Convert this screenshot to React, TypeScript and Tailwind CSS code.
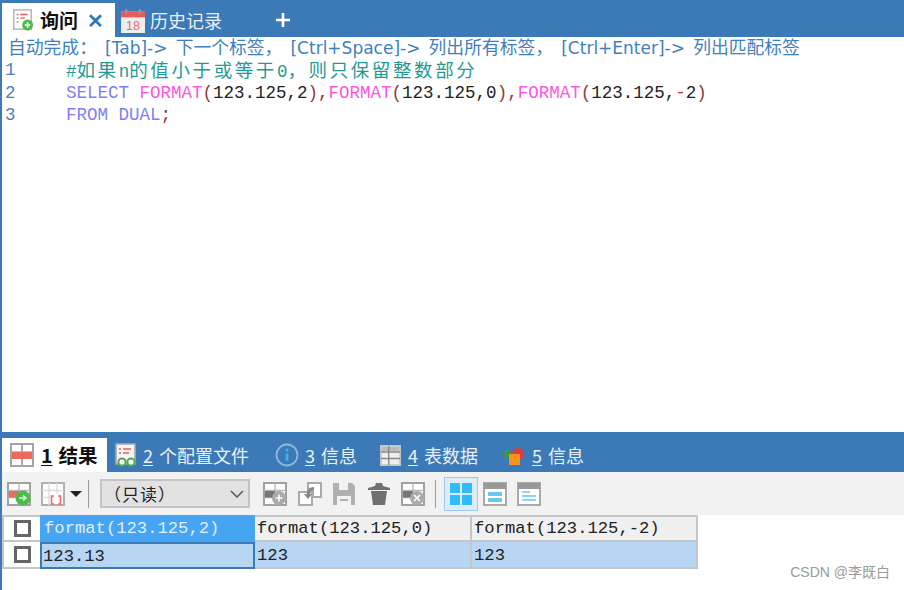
import type { ReactNode } from "react";

const cjk = "font-['Noto_Sans_CJK_SC','Liberation_Sans',sans-serif]";
const mono = "font-['Liberation_Mono','Noto_Sans_CJK_SC',monospace]";

function Svg({ size = 24, children }: { size?: number; children: ReactNode }) {
  return (
    <svg width={size} height={size} viewBox="0 0 24 24" className="shrink-0">
      {children}
    </svg>
  );
}

function GridBase() {
  return (
    <>
      <rect x="1" y="1" width="22" height="22" fill="#fff" stroke="#a0a0a0" strokeWidth="2" />
      <path d="M1 8.5H23M1 15.5H23M12 1V23" stroke="#b8b8b8" strokeWidth="1.4" />
    </>
  );
}

function QueryIcon() {
  return (
    <Svg size={22}>
      <rect x="2" y="1" width="19" height="21" fill="#fff" stroke="#b5b5b5" strokeWidth="1.6" />
      <path d="M5 6H7M9 6H17M5 10H7M9 10H14M5 14H7" stroke="#e0605a" strokeWidth="1.5" />
      <circle cx="17" cy="17.5" r="6" fill="#4dbb4a" />
      <path d="M14 17.5H20M17 14.5V20.5" stroke="#fff" strokeWidth="1.8" />
    </Svg>
  );
}

function CalendarIcon() {
  return (
    <Svg size={25}>
      <rect x="1" y="3" width="23" height="21" fill="#eeeeee" />
      <rect x="1" y="3" width="23" height="6" fill="#ea5a5a" />
      <path d="M6 1V6M19 1V6" stroke="#999" strokeWidth="2" />
      <text x="12.5" y="21" textAnchor="middle" fontSize="12" fill="#e66a6a" fontFamily="Liberation Sans">18</text>
    </Svg>
  );
}

function TabLabel({ n, label }: { n: string; label: string }) {
  return (
    <span className="flex gap-[6px] whitespace-nowrap">
      <span className="underline underline-offset-2">{n}</span>
      <span>{label}</span>
    </span>
  );
}

function ResultTabs() {
  return (
    <div className={`flex h-10 shrink-0 items-end bg-[#3c7ab7] text-[18px] text-[#e8f0f8] ${cjk}`}>
      <div className="flex h-[34px] w-[105px] items-center gap-[7px] bg-white pl-2 text-[19.5px] font-bold text-[#111]">
        <Svg>
          <rect x="1" y="1" width="22" height="22" fill="#fff" stroke="#a5a5a5" strokeWidth="2" />
          <rect x="2" y="8.5" width="20" height="7.5" fill="#ee6a60" />
          <path d="M12 1V9M12 16V23" stroke="#aaa" strokeWidth="2" />
        </Svg>
        <TabLabel n="1" label="结果" />
      </div>
      <div className="ml-[7px] flex h-[34px] items-center gap-[5px]">
        <Svg>
          <rect x="2" y="1" width="19" height="20" fill="#f4f4f4" stroke="#aaa" strokeWidth="1.6" />
          <path d="M5 6H7M9 6H17M5 10H7M9 10H15" stroke="#e0605a" strokeWidth="1.5" />
          <circle cx="8" cy="19" r="3.6" fill="#fff" stroke="#4dab4a" strokeWidth="2" />
          <circle cx="17" cy="19" r="3.6" fill="#fff" stroke="#4dab4a" strokeWidth="2" />
        </Svg>
        <TabLabel n="2" label="个配置文件" />
      </div>
      <div className="ml-[26px] flex h-[34px] items-center gap-[6px]">
        <Svg>
          <circle cx="12" cy="12" r="10.5" fill="none" stroke="#8fb8d8" strokeWidth="1.8" />
          <circle cx="12" cy="7" r="1.6" fill="#35b4f4" />
          <path d="M12 10.5V18" stroke="#35b4f4" strokeWidth="2.6" />
        </Svg>
        <TabLabel n="3" label="信息" />
      </div>
      <div className="ml-[23px] flex h-[34px] items-center gap-[7px]">
        <Svg size={21}>
          <rect x="1" y="1" width="22" height="22" fill="#eee" stroke="#c4c4c4" strokeWidth="2" />
          <rect x="2" y="2" width="20" height="5" fill="#bbb" />
          <path d="M1 8H23M1 15.5H23M10 1V23" stroke="#888" strokeWidth="1.6" />
        </Svg>
        <TabLabel n="4" label="表数据" />
      </div>
      <div className="ml-[23px] flex h-[34px] items-center gap-[7px]">
        <Svg>
          <path d="M1 15L7 5L12 15Z" fill="#3a9a3a" />
          <circle cx="17" cy="11" r="6" fill="#e03a3a" />
          <rect x="8" y="11" width="11" height="11" fill="#f5941d" />
        </Svg>
        <TabLabel n="5" label="信息" />
      </div>
    </div>
  );
}

function ToolButton({ children, active }: { children: ReactNode; active?: boolean }) {
  return (
    <div className={`flex size-[34px] shrink-0 items-center justify-center border ${active ? "border-[#9cc8ec] bg-[#dcecf9]" : "border-transparent"}`}>
      {children}
    </div>
  );
}

function Toolbar() {
  return (
    <div className={`flex h-[43px] shrink-0 items-center bg-[#f2f2f2] pl-[5px] ${cjk}`}>
      <Svg>
        <GridBase />
        <rect x="2" y="9" width="10" height="6.5" fill="#ee6a60" />
        <circle cx="16" cy="16" r="7.5" fill="#4dbb4a" />
        <path d="M12 16H19M16 13.5L19 16L16 18.5" stroke="#d8f5d8" strokeWidth="1.6" fill="none" />
      </Svg>
      <div className="ml-[10px] flex items-center gap-[5px]">
        <Svg>
          <rect x="1" y="1" width="22" height="22" fill="#fff" stroke="#b0b0b0" strokeWidth="2" />
          <path d="M1 8.5H23M1 15.5H12M8 1V23M16 1V12" stroke="#dcdcdc" strokeWidth="1.4" />
          <path d="M13 14H10.5V22H13M17 14H19.5V22H17" stroke="#ee6a60" strokeWidth="1.5" fill="none" />
        </Svg>
        <div className="size-0 border-x-[6px] border-t-[6px] border-x-transparent border-t-[#222]" />
      </div>
      <div className="ml-[6px] mr-[11px] h-[28px] w-px bg-[#9a9a9a]" />
      <div className="flex h-[29px] w-[150px] items-center justify-between border-2 border-[#c4c4c4] bg-[#e2e2e2] pr-[3px] text-[17px] text-[#222]">
        <span className="pl-[2px] tracking-[1px]">（只读）</span>
        <svg width="16" height="10" viewBox="0 0 16 10">
          <path d="M2 2L8 8L14 2" fill="none" stroke="#555" strokeWidth="1.5" />
        </svg>
      </div>
      <div className="ml-[13px] flex items-center gap-[10.5px]">
        <Svg>
          <GridBase />
          <rect x="2" y="9" width="10" height="6.5" fill="#777" />
          <circle cx="16" cy="16" r="7" fill="#aaa" />
          <path d="M12.5 16H19.5M16 12.5V19.5" stroke="#fff" strokeWidth="1.6" />
        </Svg>
        <Svg>
          <path d="M10 1H23V15H15V9H10Z" fill="#fff" stroke="#aaa" strokeWidth="2" />
          <path d="M1 10H14V23H1Z" fill="#fff" stroke="#aaa" strokeWidth="2" />
          <path d="M16 5C11 5 9 8 9 12H6L10 17L14 12H12C12 9 13 8 16 8Z" fill="#888" />
        </Svg>
        <Svg>
          <path d="M1 1H20L23 4V23H1Z" fill="#b0b0b0" />
          <rect x="7" y="1" width="9" height="7" fill="#f2f2f2" />
          <rect x="5" y="14" width="14" height="9" fill="#f2f2f2" />
          <path d="M8 18H16" stroke="#b0b0b0" strokeWidth="2" />
        </Svg>
        <Svg>
          <path d="M1 6L8 4L9 1H15L16 4L23 6V8H1Z" fill="#707070" />
          <path d="M4 9H20L18 23H6Z" fill="#707070" />
        </Svg>
        <Svg>
          <GridBase />
          <rect x="2" y="9" width="10" height="6.5" fill="#777" />
          <circle cx="16" cy="16" r="7" fill="#aaa" />
          <path d="M13 13L19 19M19 13L13 19" stroke="#fff" strokeWidth="1.6" />
        </Svg>
      </div>
      <div className="ml-[10px] mr-[8px] h-[28px] w-px bg-[#9a9a9a]" />
      <ToolButton active>
        <Svg>
          <path d="M1 1H11V11H1ZM13 1H23V11H13ZM1 13H11V23H1ZM13 13H23V23H13Z" fill="#2fbcf8" />
        </Svg>
      </ToolButton>
      <ToolButton>
        <Svg>
          <rect x="1" y="1" width="22" height="22" fill="#fff" stroke="#aaa" strokeWidth="2" />
          <rect x="1" y="1" width="22" height="6" fill="#999" />
          <path d="M5 10H19V14H5ZM5 16H19V20H5Z" fill="#6cc4f2" />
        </Svg>
      </ToolButton>
      <ToolButton>
        <Svg>
          <rect x="1" y="1" width="22" height="22" fill="#fff" stroke="#aaa" strokeWidth="2" />
          <rect x="1" y="1" width="22" height="6" fill="#999" />
          <path d="M5 10H13M5 14H19M5 18H19" stroke="#6cc4f2" strokeWidth="1.6" />
        </Svg>
      </ToolButton>
    </div>
  );
}

function RowCheck() {
  return <div className="size-[17px] border-[3px] border-[#666] bg-white" />;
}

function ResultTable() {
  const cols = ["format(123.125,0)", "format(123.125,-2)"];
  return (
    <div className={`grid w-[696px] grid-cols-[38px_215px_217px_226px] grid-rows-[27px_27px] text-[17.2px] leading-none ${mono}`}>
      <div className="flex items-center justify-center border-y-2 border-l-2 border-[#c6c6c6] bg-white">
        <RowCheck />
      </div>
      <div className="flex items-center bg-[#46a5f3] pl-[4px] pt-[1px] text-[#dff0ff]">format(123.125,2)</div>
      {cols.map((c) => (
        <div key={c} className="flex items-center border-y-2 border-r-2 border-[#c6c6c6] bg-[#f0f0f0] pl-[2px] pt-[1px] text-[#222]">
          {c}
        </div>
      ))}
      <div className="flex items-center justify-center border-b-2 border-l-2 border-[#c6c6c6] bg-white">
        <RowCheck />
      </div>
      <div className="flex items-center border-2 border-[#3c7ab7] bg-[#b6d6f4] pl-[1px] pt-[2px] text-[#222]">123.13</div>
      <div className="flex items-center border-r-2 border-b-2 border-[#c6c6c6] bg-[#b6d6f4] pl-[2px] pt-[3px] text-[#222]">123</div>
      <div className="flex items-center border-r-2 border-b-2 border-[#c6c6c6] bg-[#b6d6f4] pl-[2px] pt-[3px] text-[#222]">123</div>
    </div>
  );
}

function Key({ children }: { children: ReactNode }) {
  return <span className="text-[17px]">{children}</span>;
}

function Han({ children }: { children: ReactNode }) {
  return <span className="text-[18.5px] leading-none tracking-[2.6px]">{children}</span>;
}

export default function App() {
  return (
    <div className="flex h-[590px] w-[904px] flex-col overflow-hidden border-l-2 border-[#3c7ab7] bg-white">
      <div className={`flex h-[37px] shrink-0 items-end bg-[#3c7ab7] text-[18px] ${cjk}`}>
        <div className="flex h-[34px] w-[113px] items-center bg-white pl-[10px] text-[19px] font-bold text-[#111]">
          <QueryIcon />
          <span className="ml-[6px] whitespace-nowrap">询问</span>
          <span className="ml-[9px] text-[20px] leading-none text-[#2f78b8]">✕</span>
        </div>
        <div className="ml-[5px] flex h-[34px] items-center gap-[5px] text-[#e8f0f8]">
          <CalendarIcon />
          <span className="whitespace-nowrap">历史记录</span>
        </div>
        <div className="ml-[53px] flex h-[34px] items-center">
          <svg width="16" height="16" viewBox="0 0 16 16">
            <path d="M8 1V15M1 8H15" stroke="#fff" strokeWidth="2.6" />
          </svg>
        </div>
      </div>

      <div className="flex min-h-0 flex-1 flex-col pl-[3px]">
        <div className="whitespace-pre pl-[3px] font-['DejaVu_Sans','Noto_Sans_CJK_SC',sans-serif] text-[17.8px] leading-[21px] text-[#3f7fbd] [word-spacing:2.5px]">
          自动完成： <Key>[Tab]-&gt;</Key> 下一个标签， <Key>[Ctrl+Space]-&gt;</Key> 列出所有标签， <Key>[Ctrl+Enter]-&gt;</Key> 列出匹配标签
        </div>
        <div className={`grid auto-rows-[22.5px] grid-cols-[61px_1fr] whitespace-pre text-[17.5px] leading-[22.5px] ${mono}`}>
          <span className="text-[#4a80b8]">1</span>
          <span className="pt-[1.5px] text-[#1f9a94]">
            #<Han>如果</Han>n<Han>的值小于或等于</Han>0<Han>，则只保留整数部分</Han>
          </span>
          <span className="text-[#4a80b8]">2</span>
          <span>
            <span className="text-[#7f7ff5]">SELECT </span>
            <span className="text-[#ff55dd]">FORMAT</span>
            <span className="text-[#8a3a3a]">(</span>
            <span className="text-[#222]">123.125,2</span>
            <span className="text-[#8a3a3a]">),</span>
            <span className="text-[#ff55dd]">FORMAT</span>
            <span className="text-[#8a3a3a]">(</span>
            <span className="text-[#222]">123.125,0</span>
            <span className="text-[#8a3a3a]">),</span>
            <span className="text-[#ff55dd]">FORMAT</span>
            <span className="text-[#8a3a3a]">(</span>
            <span className="text-[#222]">123.125,</span>
            <span className="text-[#c03030]">-</span>
            <span className="text-[#222]">2</span>
            <span className="text-[#8a3a3a]">)</span>
          </span>
          <span className="text-[#4a80b8]">3</span>
          <span>
            <span className="text-[#7f7ff5]">FROM DUAL</span>
            <span className="text-[#8a3a3a]">;</span>
          </span>
        </div>
      </div>

      <ResultTabs />
      <Toolbar />
      <div className="relative h-[75px] shrink-0">
        <ResultTable />
        <span className="absolute right-[14px] top-[50px] font-['Liberation_Sans','Noto_Sans_CJK_SC',sans-serif] text-[14px] leading-none text-[#9a9a9a]">
          CSDN @李既白
        </span>
      </div>
    </div>
  );
}
